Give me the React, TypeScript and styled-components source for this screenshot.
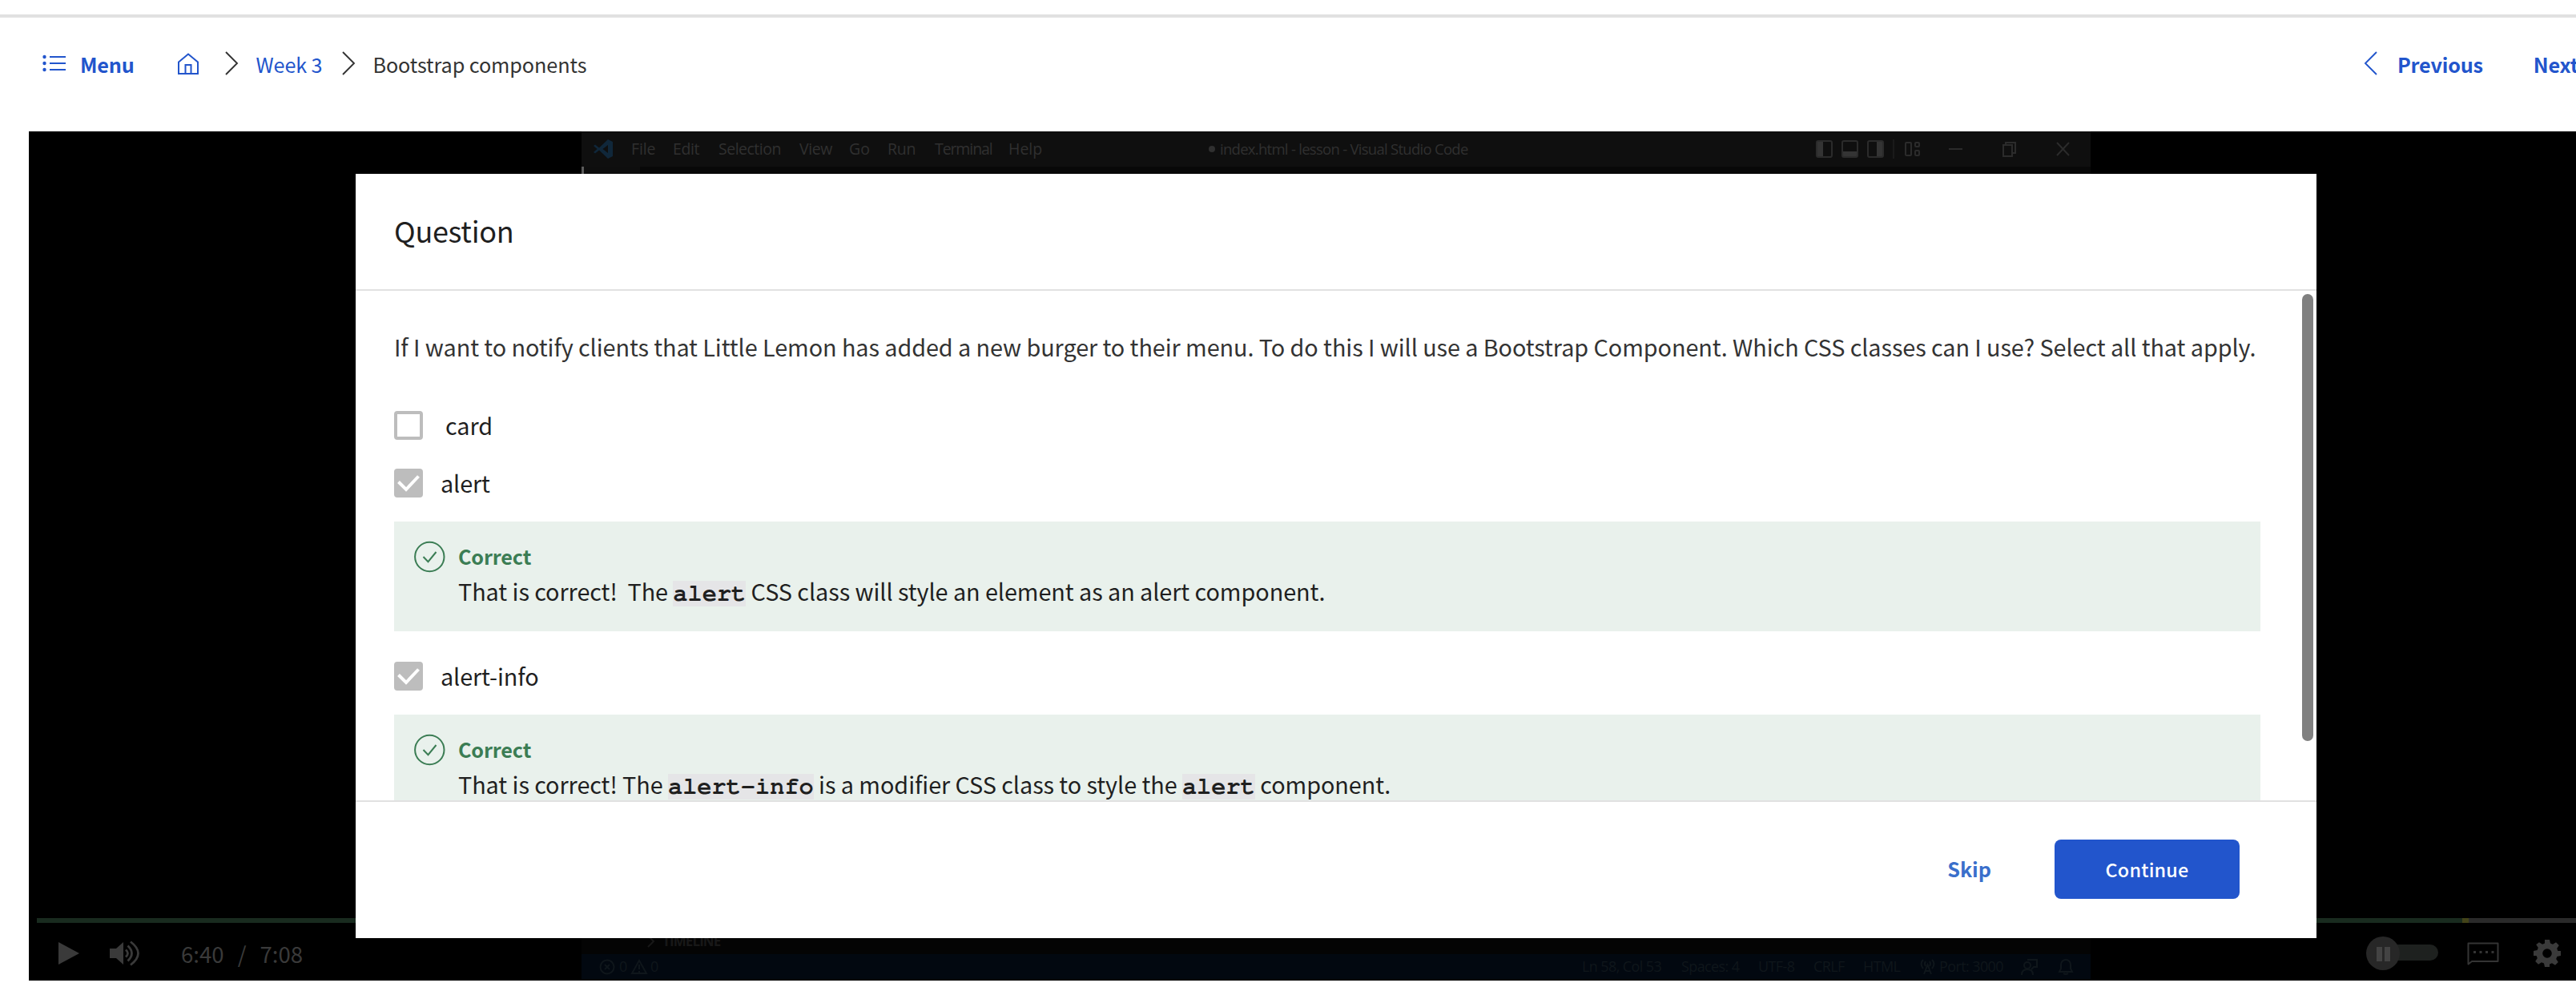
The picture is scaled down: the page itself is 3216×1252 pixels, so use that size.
import React from "react";
import styled, { createGlobalStyle } from "styled-components";

const sans = '"Noto Sans CJK SC", "Noto Sans", sans-serif';
const segoe = '"Open Sans", "Noto Sans", sans-serif';
const mono = '"FreeMono", "Courier Prime", "Liberation Mono", monospace';
const blue = "#2255cc";

const GlobalStyle = createGlobalStyle`
  * { box-sizing: border-box; }
  body { margin: 0; background: #fff; overflow: hidden; }
  svg { display: block; flex: none; overflow: visible; }
`;

const Page = styled.div`
  width: 3216px;
  height: 1252px;
  padding-top: 18px;
  overflow: hidden;
  font-family: ${sans};
  color: #1f1f1f;
`;

/* ---------- breadcrumb bar ---------- */

const TopRule = styled.div`
  height: 4px;
  background: #e1e1e1;
`;

const NavBar = styled.nav`
  display: flex;
  align-items: center;
  height: 114px;
  margin-bottom: 28px;
  padding-left: 52px;
  font-size: 25.2px;
  line-height: 36px;
  white-space: nowrap;
`;

const NavItem = styled.span<{ $gap?: number; $bold?: boolean; $color?: string; $spacing?: number }>`
  margin-left: ${(p) => p.$gap ?? 0}px;
  padding-top: 2px;
  font-weight: ${(p) => (p.$bold ? 700 : 400)};
  color: ${(p) => p.$color ?? blue};
  letter-spacing: ${(p) => p.$spacing ?? 0}px;
`;

const NavIcon = styled.svg<{ $gap?: number }>`
  margin-left: ${(p) => p.$gap ?? 0}px;
`;

const Pager = styled.div`
  display: flex;
  align-items: center;
  width: 265px;
  margin-left: auto;
  padding-bottom: 1px;
  overflow: hidden;
`;

/* ---------- video ---------- */

const Video = styled.section`
  position: relative;
  width: 3180px;
  height: 1060px;
  margin-left: 36px;
  background: #000;
`;

const EditorFrame = styled.div`
  display: flex;
  flex-direction: column;
  width: 1884px;
  height: 1058px;
  margin-left: 690px;
  font-family: ${segoe};
  white-space: nowrap;
`;

const TitleBar = styled.div`
  display: flex;
  align-items: center;
  height: 44px;
  padding: 0 25px 0 15px;
  background: #0f0f0f;
  color: #303030;
  font-size: 19.5px;
  line-height: 44px;
`;

const MenuEntry = styled.span<{ $w: number; $spacing?: number }>`
  width: ${(p) => p.$w}px;
  letter-spacing: ${(p) => p.$spacing ?? 0}px;
`;

const FileTitle = styled.div`
  display: flex;
  align-items: center;
  gap: 6px;
  margin-left: 208px;
  font-size: 18.5px;
  letter-spacing: -0.72px;
`;

const UnsavedDot = styled.i`
  width: 8px;
  height: 8px;
  border-radius: 50%;
  background: #303030;
`;

const WindowIcons = styled.svg`
  margin-left: auto;
`;

const TabStrip = styled.div`
  display: flex;
  height: 20px;
  background: #080808;
  &::before {
    content: "";
    width: 3px;
    height: 9px;
    background: #5c5c5c;
  }
  &::after {
    content: "";
    width: 70px;
    background: #0e0e0e;
  }
`;

const SideBarFoot = styled.div`
  display: flex;
  align-items: center;
  height: 28px;
  margin-top: auto;
  padding: 0 0 5px 82px;
  gap: 10px;
  background: #040404;
  color: #181818;
  font-size: 17px;
  font-weight: 700;
  letter-spacing: -0.9px;
  line-height: 23px;
`;

const StatusBar = styled.div`
  display: flex;
  align-items: center;
  height: 31px;
  padding-left: 22px;
  background: #020810;
  color: #0f161b;
  font-size: 18px;
  line-height: 31px;
  letter-spacing: -0.6px;
`;

const StatusEntry = styled.span<{ $w: number }>`
  width: ${(p) => p.$w}px;
`;

/* ---------- player controls ---------- */

const Controls = styled.div`
  position: absolute;
  left: 10px;
  right: 0;
  bottom: 0;
  height: 78px;
`;

const Progress = styled.div`
  display: flex;
  height: 6px;
`;

const ProgressPart = styled.div<{ $w?: number; $color: string }>`
  ${(p) => (p.$w ? `width: ${p.$w}px;` : "flex: 1;")}
  background: ${(p) => p.$color};
`;

const ControlRow = styled.div`
  display: flex;
  align-items: center;
  height: 72px;
  padding: 4px 19px 0 27px;
  color: #3a3a3a;
  font-size: 27.6px;
  line-height: 36px;
`;

const VolumeIcon = styled.svg`
  margin-left: 38px;
`;

const Time = styled.span<{ $gap: number }>`
  margin-left: ${(p) => p.$gap}px;
`;

const AutoplayToggle = styled.div`
  display: flex;
  align-items: center;
  width: 90px;
  height: 42px;
  margin-left: auto;
  background: linear-gradient(#1e211f, #1e211f) 21px 10px / 40px 20px no-repeat;
  &::after {
    content: "";
    width: 48px;
    height: 20px;
    margin-bottom: 2px;
    border-radius: 0 10px 10px 0;
    background: #1e211f;
  }
`;

const Knob = styled.div`
  display: flex;
  align-items: center;
  justify-content: center;
  gap: 3px;
  width: 42px;
  height: 42px;
  border-radius: 50%;
  background: #272727;
`;

const PauseBar = styled.i`
  width: 7px;
  height: 18px;
  margin-top: 2px;
  background: #434343;
`;

const ChatIcon = styled.svg`
  margin-left: 36px;
`;

const GearIcon = styled.svg`
  margin-left: 43px;
`;

/* ---------- question dialog ---------- */

const Dialog = styled.div`
  position: absolute;
  left: 408px;
  top: 53px;
  display: flex;
  flex-direction: column;
  width: 2448px;
  height: 954px;
  background: #fff;
`;

const DialogHeader = styled.header`
  height: 146px;
  padding-left: 48px;
  border-bottom: 2px solid #e1e1e1;
  font-size: 36px;
  line-height: 141px;
  letter-spacing: -0.3px;
`;

const DialogBody = styled.div`
  display: flex;
  height: 636px;
  overflow: hidden;
`;

const Quiz = styled.div`
  flex: none;
  width: 2330px;
  margin-left: 48px;
  padding-top: 46px;
`;

const Prompt = styled.p`
  height: 48px;
  margin: 0 0 56px;
  color: #333;
  font-size: 28.8px;
  line-height: 48px;
  letter-spacing: -0.07px;
  white-space: nowrap;
`;

const Choice = styled.label<{ $after: number; $gap: number }>`
  display: flex;
  align-items: center;
  gap: ${(p) => p.$gap}px;
  height: 36px;
  margin-bottom: ${(p) => p.$after}px;
  font-size: 28.8px;
  line-height: 36px;
  letter-spacing: -0.1px;
`;

const Box = styled.span<{ $checked?: boolean }>`
  display: flex;
  align-items: center;
  justify-content: center;
  width: 36px;
  height: 36px;
  border: 4px solid #bdbdbd;
  border-radius: 4px;
  background: ${(p) => (p.$checked ? "#bdbdbd" : "#fff")};
`;

const Feedback = styled.div`
  display: flex;
  gap: 16px;
  height: 137px;
  margin-bottom: 38px;
  padding: 21px 0 0 25px;
  background: #e9f1ec;
`;

const FeedbackText = styled.div`
  font-size: 28.8px;
  line-height: 44px;
  letter-spacing: -0.06px;
  white-space: pre;
`;

const Verdict = styled.div`
  height: 44px;
  color: #3b7d54;
  font-size: 25.2px;
  font-weight: 700;
  letter-spacing: -0.15px;
`;

const Code = styled.code`
  padding: 1px 0;
  background: #e5e5e7;
  font-family: ${mono};
  font-size: 30.3px;
  font-weight: 700;
  letter-spacing: 0;
`;

const ScrollTrack = styled.div`
  width: 14px;
  height: 558px;
  margin: 4px 0 0 52px;
  border-radius: 7px;
  background: #808080;
`;

const DialogFooter = styled.footer`
  display: flex;
  align-items: center;
  justify-content: flex-end;
  gap: 79px;
  height: 172px;
  padding: 0 96px 0 0;
  border-top: 2px solid #e1e1e1;
`;

const SkipLink = styled.a`
  color: #3a6fcb;
  font-size: 25.2px;
  font-weight: 700;
  line-height: 72px;
  margin-top: -4px;
`;

const ContinueButton = styled.button`
  width: 231px;
  height: 74px;
  margin-top: -2px;
  padding: 0;
  border: 0;
  border-radius: 8px;
  background: ${blue};
  color: #fff;
  font-family: ${sans};
  font-size: 23.4px;
  font-weight: 500;
  letter-spacing: 0.2px;
  line-height: 72px;
`;

const menuEntries: [string, number, number][] = [
  ["File", 52, -0.1],
  ["Edit", 57, -0.4],
  ["Selection", 101, -0.5],
  ["View", 62, -0.4],
  ["Go", 48, 0],
  ["Run", 59, -0.3],
  ["Terminal", 92, -1.1],
  ["Help", 42, 0],
];

const statusEntries: [string, number][] = [
  ["Ln 58, Col 53", 124],
  ["Spaces: 4", 96],
  ["UTF-8", 69],
  ["CRLF", 62],
  ["HTML", 71],
];

function Chevron({ gap, back }: { gap: number; back?: boolean }) {
  return (
    <NavIcon $gap={gap} width={16} height={30} viewBox="0 0 16 30" fill="none" stroke={back ? blue : "#333"} strokeWidth={1.9}>
      <path d={back ? "M15 1 1 15l14 14" : "M1 1l14 14L1 29"} />
    </NavIcon>
  );
}

function Tick() {
  return (
    <svg width={28} height={24} viewBox="0 0 28 24" fill="none" stroke="#fff" strokeWidth={4}>
      <path d="M1.5 10.5l9.5 9.5L26.5 3.5" />
    </svg>
  );
}

function Correct({ children }: { children: React.ReactNode }) {
  return (
    <Feedback>
      <svg width={39} height={46} viewBox="0 0 39 46" fill="none" stroke="#3b7d54" strokeWidth={2}>
        <circle cx={19.3} cy={23} r={18.2} />
        <path d="M11.5 23l6 6.2L27.5 17" />
      </svg>
      <FeedbackText>
        <Verdict>Correct</Verdict>
        {children}
      </FeedbackText>
    </Feedback>
  );
}

function Editor() {
  return (
    <EditorFrame>
      <TitleBar>
        <svg width={25} height={24} viewBox="0 0 25 24">
          <path d="M18 0l6 3v18l-6 3L7 13.5l-5 4-2-1.5 4.5-4L0 8l2-1.500 5 4zM18 7l-6.500 5 6.500 5z" fill="#10273a" fillRule="evenodd" />
        </svg>
        <MenuEntry $w={22} />
        {menuEntries.map(([label, w, spacing]) => (
          <MenuEntry key={label} $w={w} $spacing={spacing}>
            {label}
          </MenuEntry>
        ))}
        <FileTitle>
          <UnsavedDot />
          index.html - lesson - Visual Studio Code
        </FileTitle>
        <WindowIcons width={320} height={26} viewBox="0 0 320 26" fill="none" stroke="#2b2b2b" strokeWidth={2}>
          <rect x={3} y={3} width={19} height={20} rx={2} />
          <path d="M4 4h7v18H4zM36 16h17v6H36zM78 4h7v18h-7z" fill="#343434" stroke="none" />
          <rect x={35} y={3} width={19} height={20} rx={2} />
          <rect x={67} y={3} width={19} height={20} rx={2} />
          <path d="M99 1v24" stroke="#1a1a1a" />
          <rect x={114} y={5} width={7} height={16} rx={1} />
          <rect x={126} y={5} width={5} height={5} rx={1} />
          <rect x={126} y={15} width={5} height={6} rx={1} />
          <path d="M168 13h17" />
          <path d="M236 8h11v14h-11zM239 8V5h12v13h-4" />
          <path d="M303 5l15 16M318 5l-15 16" />
        </WindowIcons>
      </TitleBar>
      <TabStrip />
      <SideBarFoot>
        <svg width={9} height={16} viewBox="0 0 9 16" fill="none" stroke="#181818" strokeWidth={2}>
          <path d="M1 1l7 7-7 7" />
        </svg>
        TIMELINE
      </SideBarFoot>
      <StatusBar>
        <svg width={20} height={20} viewBox="0 0 20 20" fill="none" stroke="#0f161b" strokeWidth={2}>
          <circle cx={10} cy={10} r={8.5} />
          <path d="M7 7l6 6M13 7l-6 6" />
        </svg>
        <StatusEntry $w={5} />
        <StatusEntry $w={15}>0</StatusEntry>
        <svg width={20} height={18} viewBox="0 0 20 18" fill="none" stroke="#0f161b" strokeWidth={2}>
          <path d="M10 1l9 16H1zM10 6v6M10 14v2" />
        </svg>
        <StatusEntry $w={4} />
        <StatusEntry $w={1163}>0</StatusEntry>
        {statusEntries.map(([label, w]) => (
          <StatusEntry key={label} $w={w}>
            {label}
          </StatusEntry>
        ))}
        <svg width={19} height={20} viewBox="0 0 19 20" fill="none" stroke="#0f161b" strokeWidth={2}>
          <path d="M5 19L9.5 7 14 19M6.5 15h6M4 1q-5 5 0 11M15 1q5 5 0 11M7 3q-2 3 0 6M12 3q2 3 0 6" />
        </svg>
        <StatusEntry $w={5} />
        <StatusEntry $w={102}>Port: 3000</StatusEntry>
        <svg width={66} height={22} viewBox="0 0 66 22" fill="none" stroke="#0f161b" strokeWidth={2}>
          <circle cx={8} cy={9} r={4} />
          <path d="M1 21q0-7 7-7t7 7M8 2h12v9h-4l-3 3M48 17h16l-2-4V8a6 6 0 0 0-12 0v5zM53 19q3 2 6 0" />
        </svg>
      </StatusBar>
    </EditorFrame>
  );
}

function Player() {
  return (
    <Controls>
      <Progress>
        <ProgressPart $w={3028} $color="#192b1f" />
        <ProgressPart $w={8} $color="#434319" />
        <ProgressPart $color="#2a2a2a" />
      </Progress>
      <ControlRow>
        <svg width={26} height={28} viewBox="0 0 26 28" fill="#3a3a3a">
          <path d="M0 0l26 14L0 28z" />
        </svg>
        <VolumeIcon width={38} height={32} viewBox="0 0 38 32" fill="none" stroke="#3a3a3a" strokeWidth={2.8}>
          <path d="M0 10h8l9-8v28l-9-8H0z" fill="#3a3a3a" stroke="none" />
          <path d="M20 11.5q5 4.5 0 9M22.500 6.500q10 9.500 0 19M26 1.500q19 14.500 0 29" />
        </VolumeIcon>
        <Time $gap={51}>6:40</Time>
        <Time $gap={17}>/</Time>
        <Time $gap={17}>7:08</Time>
        <AutoplayToggle>
          <Knob>
            <PauseBar />
            <PauseBar />
          </Knob>
        </AutoplayToggle>
        <ChatIcon width={40} height={29} viewBox="0 0 40 29" fill="none" stroke="#343434" strokeWidth={2}>
          <path d="M1.500 1.500h37v22.500H6L1.500 27.500z" strokeLinejoin="round" />
          <path d="M8 12.500h3M15.500 12.500h3M23 12.500h3M30.500 12.500h3" strokeWidth={3} />
        </ChatIcon>
        <GearIcon width={34} height={34} viewBox="-17 -17 34 34" fill="#3a3a3a">
          <path
            fillRule="evenodd"
            d="M-3-17h6l1 4.600 3 1.200 4-2.600 3.800 3.800-2.600 4 1.200 3L17-3v6l-4.600 1-1.200 3 2.600 4-3.800 3.800-4-2.600-3 1.200L3 17h-6l-1-4.600-3-1.200-4 2.600-3.800-3.800 2.600-4-1.200-3L-17 3v-6l4.600-1 1.200-3-2.600-4L-10-13.800l4 2.600 3-1.200zM0-5.800a5.800 5.800 0 1 0 0 11.600a5.800 5.800 0 1 0 0-11.600z"
          />
        </GearIcon>
      </ControlRow>
    </Controls>
  );
}

function QuestionDialog() {
  return (
    <Dialog role="dialog">
      <DialogHeader>Question</DialogHeader>
      <DialogBody>
        <Quiz>
          <Prompt>
            If I want to notify clients that Little Lemon has added a new burger to their menu. To do this I will use a
            Bootstrap Component. Which CSS classes can I use? Select all that apply.
          </Prompt>
          <Choice $gap={28} $after={36}>
            <Box />
            card
          </Choice>
          <Choice $gap={22} $after={30}>
            <Box $checked>
              <Tick />
            </Box>
            alert
          </Choice>
          <Correct>
            {"That is correct!  The "}
            <Code>alert</Code>
            {" CSS class will style an element as an alert component."}
          </Correct>
          <Choice $gap={22} $after={30}>
            <Box $checked>
              <Tick />
            </Box>
            alert-info
          </Choice>
          <Correct>
            {"That is correct! The "}
            <Code>alert-info</Code>
            {" is a modifier CSS class to style the "}
            <Code>alert</Code>
            {" component."}
          </Correct>
        </Quiz>
        <ScrollTrack />
      </DialogBody>
      <DialogFooter>
        <SkipLink>Skip</SkipLink>
        <ContinueButton>Continue</ContinueButton>
      </DialogFooter>
    </Dialog>
  );
}

export default function App() {
  return (
    <>
      <GlobalStyle />
      <Page>
        <TopRule />
        <NavBar>
          <NavIcon $gap={1} width={30} height={22} viewBox="0 0 30 22" fill={blue}>
            <path d="M9 2h20v2H9zM9 10h20v2H9zM9 18h20v2H9z" />
            <circle cx={2.5} cy={3} r={2.2} />
            <circle cx={2.5} cy={11} r={2.2} />
            <circle cx={2.5} cy={19} r={2.2} />
          </NavIcon>
          <NavItem $bold $gap={17} $spacing={-0.2}>Menu</NavItem>
          <NavIcon $gap={54} width={26} height={26} viewBox="0 0 26 26" fill="none" stroke={blue} strokeWidth={2}>
            <path d="M1 11.5L13 1.5l12 10V26H1zM9.5 26V15h7v11" />
          </NavIcon>
          <Chevron gap={33} />
          <NavItem $gap={23} $spacing={-0.1}>Week 3</NavItem>
          <Chevron gap={25} />
          <NavItem $gap={22} $color="#333" $spacing={-0.08}>Bootstrap components</NavItem>
          <Pager>
            <Chevron gap={1} back />
            <NavItem $bold $gap={25} $spacing={-0.2}>Previous</NavItem>
            <NavItem $bold $gap={63} $spacing={-0.2}>Next</NavItem>
          </Pager>
        </NavBar>
        <Video>
          <Editor />
          <Player />
          <QuestionDialog />
        </Video>
      </Page>
    </>
  );
}
